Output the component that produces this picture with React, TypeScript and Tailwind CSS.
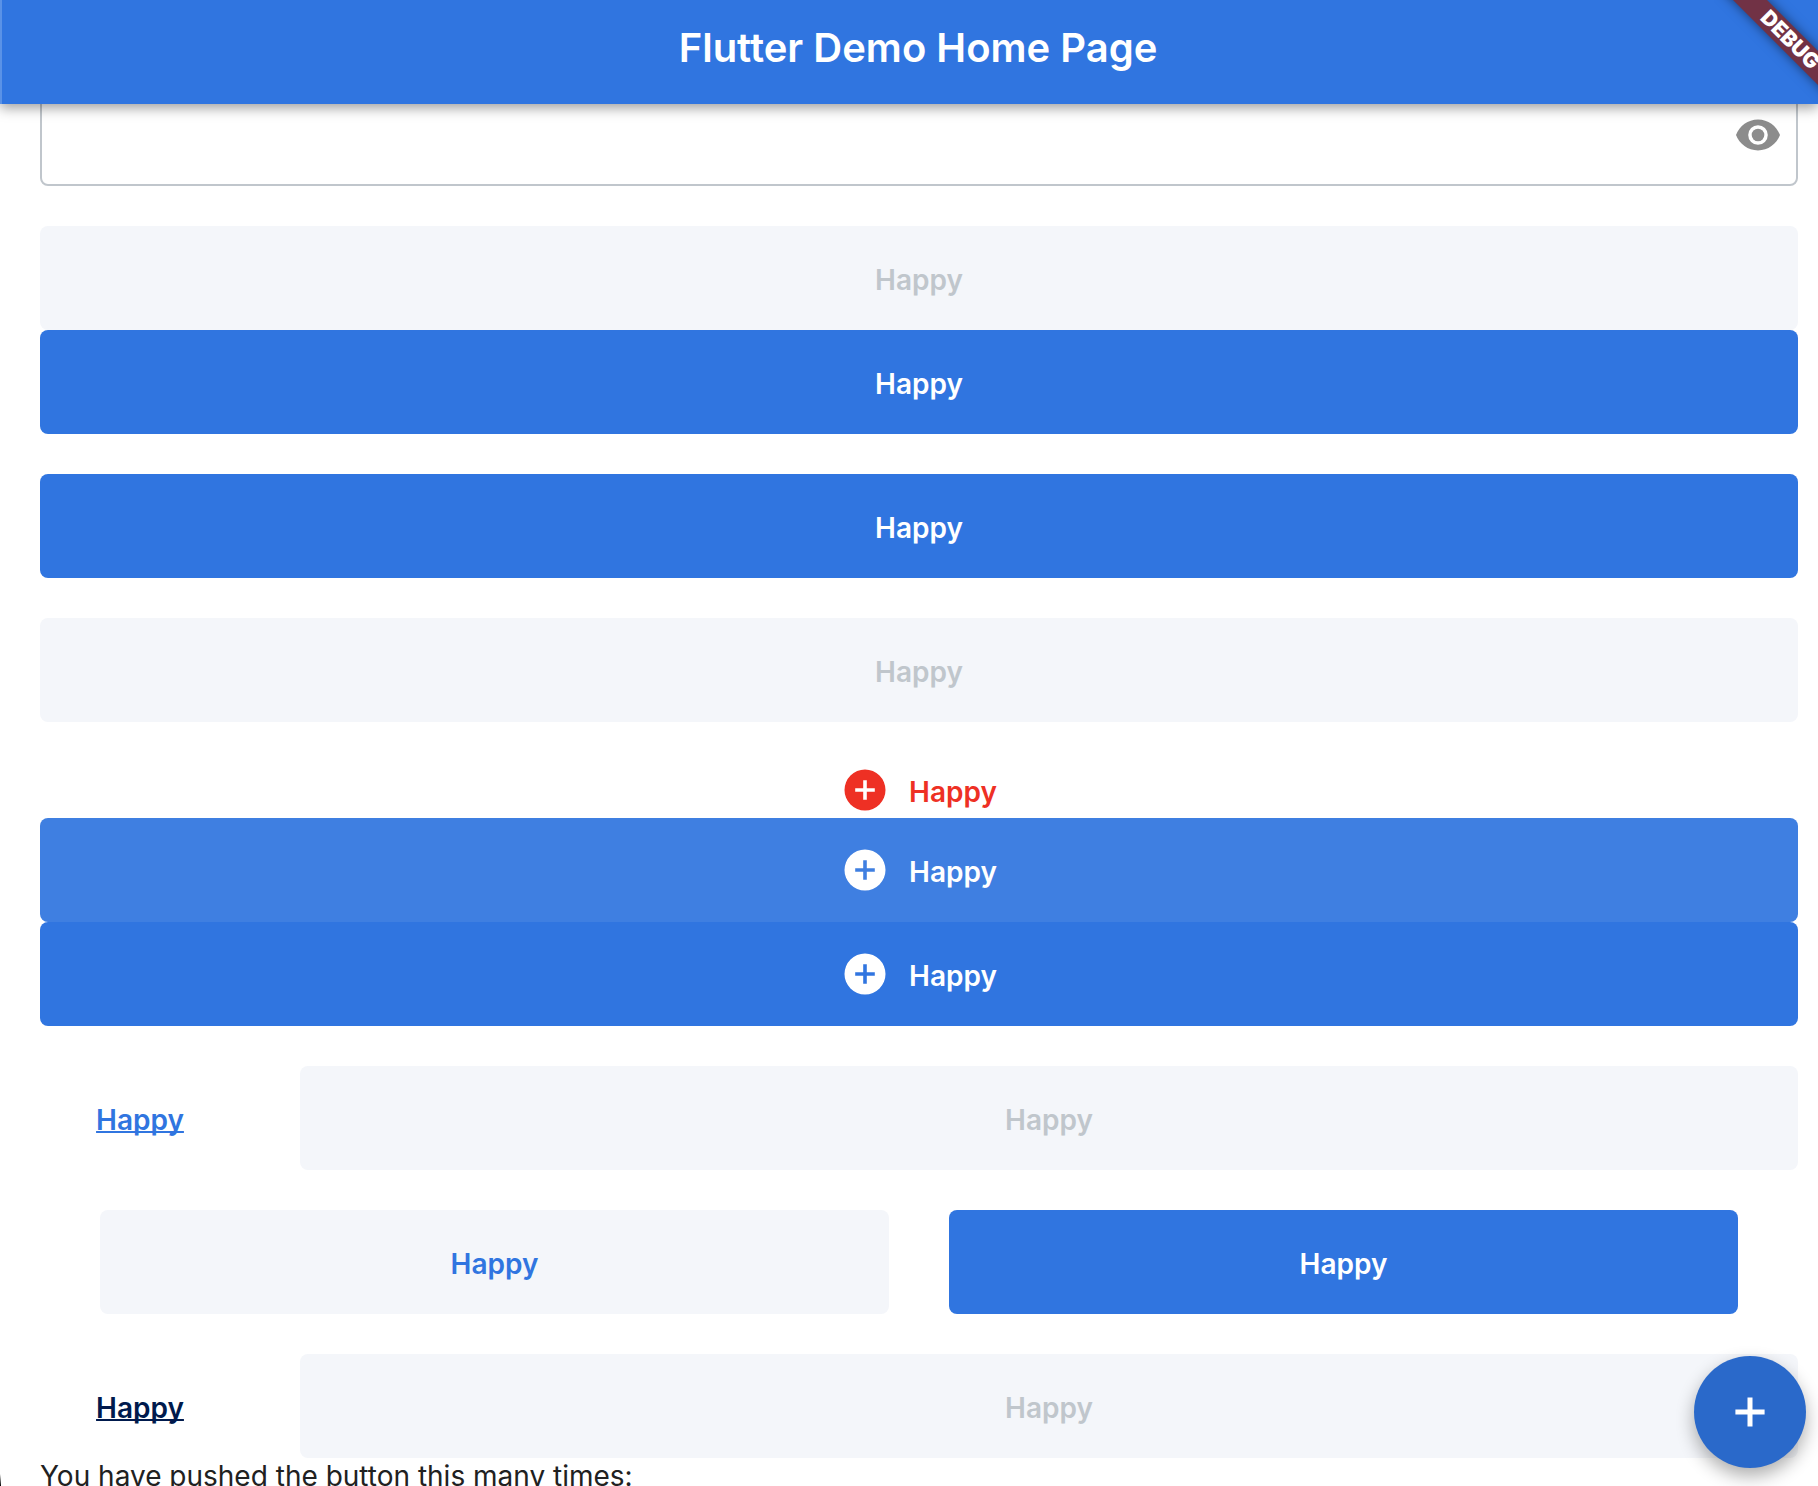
import type { ReactNode } from "react";

const base =
  "flex h-[104px] items-center justify-center gap-5 rounded-lg text-[28px] leading-9 font-semibold";

const tones = {
  primary: "bg-[#3075e0] text-white",
  hover: "bg-[#3f7fe1] text-white",
  soft: "bg-[#f4f6fa] text-[#3075e0]",
  disabled: "bg-[#f4f6fa] text-[#c0c6cc]",
};

function AddCircleIcon() {
  return (
    <svg viewBox="0 0 48 48" className="size-12" fill="currentColor" aria-hidden="true">
      <path
        fillRule="evenodd"
        d="M24 3.5a20.5 20.5 0 1 0 0 41a20.5 20.5 0 1 0 0-41zM22.2 14.2h3.6v8h8v3.6h-8v8h-3.6v-8h-8v-3.6h8z"
      />
    </svg>
  );
}

function PlusIcon() {
  return (
    <svg viewBox="0 0 48 48" className="size-12" fill="currentColor" aria-hidden="true">
      <path d="M21.5 9.4h5v12.1h12.1v5H26.5v12.1h-5V26.5H9.4v-5h12.1z" />
    </svg>
  );
}

function EyeIcon() {
  return (
    <svg viewBox="0 0 24 24" className="size-12" fill="currentColor" aria-hidden="true">
      <path
        fillRule="evenodd"
        d="M12 4.3C7 4.3 2.73 7.5 1 12c1.73 4.5 6 7.7 11 7.7s9.27-3.2 11-7.7c-1.73-4.5-6-7.7-11-7.7zM12 7.1a4.9 4.9 0 1 0 0 9.8a4.9 4.9 0 1 0 0-9.8z"
      />
      <circle cx="12" cy="12" r="3.15" />
    </svg>
  );
}

type BlockButtonProps = {
  tone: keyof typeof tones;
  icon?: ReactNode;
  className?: string;
};

function BlockButton({ tone, icon, className = "w-full" }: BlockButtonProps) {
  return (
    <button
      type="button"
      disabled={tone === "disabled"}
      className={`${base} ${tones[tone]} ${className}`}
    >
      {icon}
      <span className="pt-1">Happy</span>
    </button>
  );
}

function LinkRow({ color }: { color: string }) {
  return (
    <div className="flex gap-[60px]">
      <a
        href="#happy"
        className={`flex w-[200px] items-center justify-center pt-1 text-[28px] leading-9 font-semibold underline decoration-2 underline-offset-1 [text-decoration-skip-ink:none] ${color}`}
      >
        Happy
      </a>
      <BlockButton tone="disabled" className="flex-1" />
    </div>
  );
}

export default function App() {
  return (
    <div className="relative flex h-screen flex-col overflow-hidden bg-white font-['Inter',sans-serif]">
      <header className="relative z-10 flex h-[104px] shrink-0 items-center justify-center border-l-2 border-[#5a92e7] bg-[#3075e0] pr-5 pl-9 pb-2 shadow-[0_4px_12px_rgba(0,0,0,0.38)]">
        <h1 className="text-[40px] leading-12 font-semibold text-white">
          Flutter Demo Home Page
        </h1>
      </header>

      <main className="flex min-h-0 flex-1 flex-col pr-5 pl-10">
        <div className="-mt-5 flex h-[102px] shrink-0 items-center rounded-lg border-2 border-[#c0c6cc] pr-[14px]">
          <input
            type="password"
            aria-label="Password"
            className="h-full min-w-0 flex-1 bg-transparent px-6 text-[28px] outline-none"
          />
          <button type="button" aria-label="Show password" className="text-[#8c8c8c]">
            <EyeIcon />
          </button>
        </div>

        <div className="mt-10 shrink-0">
          <BlockButton tone="disabled" />
          <BlockButton tone="primary" />
        </div>

        <div className="mt-10 flex shrink-0 flex-col gap-10">
          <BlockButton tone="primary" />
          <BlockButton tone="disabled" />
        </div>

        <div className="mt-10 shrink-0">
          <button
            type="button"
            className="flex h-14 w-full items-center justify-center gap-5 text-[28px] leading-9 font-semibold text-[#ee3024]"
          >
            <AddCircleIcon />
            <span className="pt-1">Happy</span>
          </button>
          <BlockButton tone="hover" icon={<AddCircleIcon />} />
          <BlockButton tone="primary" icon={<AddCircleIcon />} />
        </div>

        <div className="mt-10 flex shrink-0 flex-col gap-10">
          <LinkRow color="text-[#3075e0]" />
          <div className="flex gap-[60px] px-[60px]">
            <BlockButton tone="soft" className="flex-1" />
            <BlockButton tone="primary" className="flex-1" />
          </div>
          <LinkRow color="text-[#001a4d]" />
        </div>

        <p className="shrink-0 text-[28px] leading-9 text-[#212121]">
          You have pushed the button this many times:
        </p>
      </main>

      <button
        type="button"
        aria-label="Increment"
        className="absolute right-3 bottom-[18px] z-10 flex size-28 items-center justify-center rounded-full bg-[#2a69ca] text-white shadow-[0_8px_18px_rgba(0,0,0,0.32)]"
      >
        <PlusIcon />
      </button>

      <div className="absolute bottom-0 left-0 h-3 w-px bg-linear-to-b from-transparent to-black" />

      <div className="pointer-events-none absolute top-0 right-0 z-20 size-[104px] overflow-hidden">
        <div className="absolute -top-8 -right-[72px] flex h-[144px] w-[200px] items-center">
          <span className="flex h-6 w-full rotate-45 items-center justify-center bg-[#713245] text-[21px] leading-6 font-black text-white shadow-[0_0_12px_rgba(0,0,0,0.5)]">
            DEBUG
          </span>
        </div>
      </div>
    </div>
  );
}
